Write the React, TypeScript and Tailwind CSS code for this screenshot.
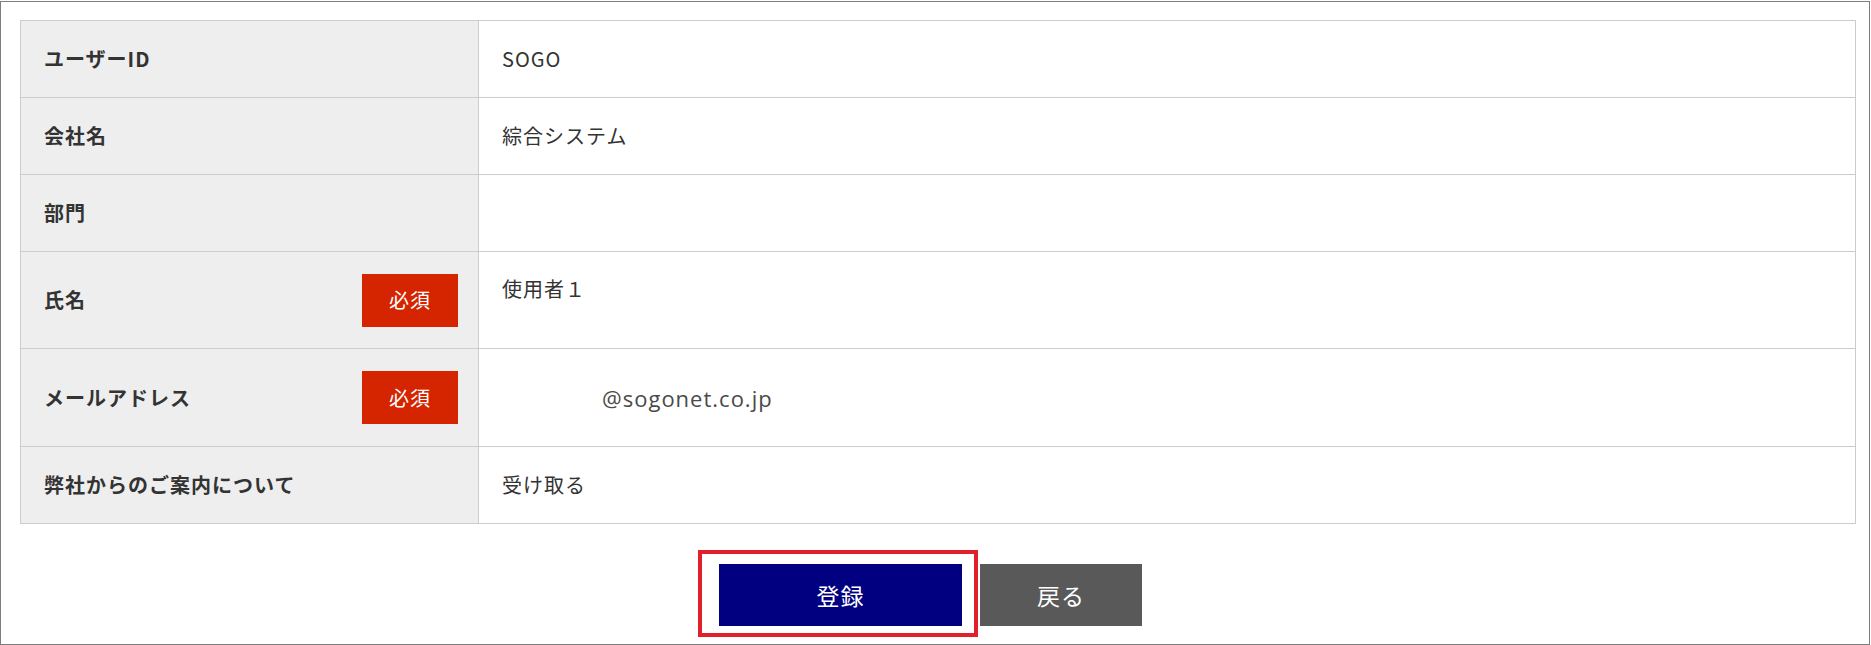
import React from 'react';

const jp = "font-['Noto_Sans_CJK_JP','Noto_Sans',sans-serif]";

// Red "required" tag next to a label
const Required = () => (
  <span className="w-[96px] h-[53px] bg-[#d42400] text-white text-[20px] tracking-[1px] flex items-center justify-center">
    必須
  </span>
);

type Row = {
  label: string;
  value: React.ReactNode;
  required?: boolean;
  h: string;
  align?: 'top' | 'center';
};

const rows: Row[] = [
  { label: 'ユーザーID', value: 'SOGO', h: 'h-[76px]', align: 'center' },
  { label: '会社名', value: '綜合システム', h: 'h-[77px]', align: 'center' },
  { label: '部門', value: '', h: 'h-[77px]', align: 'center' },
  { label: '氏名', value: '使用者１', required: true, h: 'h-[97px]', align: 'top' },
  {
    label: 'メールアドレス',
    value: (
      <span className="pl-[100px] font-['Open_Sans',sans-serif] text-[22px] text-[#4a4a4a]">
        @sogonet.co.jp
      </span>
    ),
    required: true,
    h: 'h-[98px]',
    align: 'center',
  },
  { label: '弊社からのご案内について', value: '受け取る', h: 'h-[77px]', align: 'center' },
];

export default function App() {
  return (
    <div className={`pt-[1px] bg-white ${jp}`}>
      <div className="w-[1870px] h-[644px] border border-[#7d7d7d] bg-white pl-[19px] pt-[18px] flex flex-col">
        {/* Confirmation table */}
        <div className="w-[1836px] border border-[#cccccc]">
          {rows.map((r, i) => (
            <div key={i} className={`flex ${r.h} ${i > 0 ? 'border-t border-[#cccccc]' : ''}`}>
              <div className="w-[458px] shrink-0 bg-[#eeeeee] border-r border-[#cccccc] flex items-center justify-between pl-[23px] pr-[20px]">
                <span className="text-[20px] leading-[28px] tracking-[1px] font-bold text-[#333333]">{r.label}</span>
                {r.required && <Required />}
              </div>
              <div
                className={`flex-1 pl-[23px] text-[20px] leading-[28px] tracking-[1px] text-[#333333] flex ${
                  r.align === 'top' ? 'items-start pt-[23px]' : 'items-center'
                }`}
              >
                {r.value}
              </div>
            </div>
          ))}
        </div>

        {/* Buttons */}
        <div className="flex justify-center gap-[18px] mt-[40px] pr-[28px]">
          <div className="relative">
            <button className="w-[243px] h-[62px] bg-[#000080] text-white text-[23px] tracking-[1px]">登録</button>
            <div className="absolute -left-[21px] -right-[16px] -top-[14px] -bottom-[11px] border-4 border-[#e2202b] pointer-events-none" />
          </div>
          <button className="w-[162px] h-[62px] bg-[#595959] text-white text-[23px] tracking-[1px]">戻る</button>
        </div>
      </div>
    </div>
  );
}
